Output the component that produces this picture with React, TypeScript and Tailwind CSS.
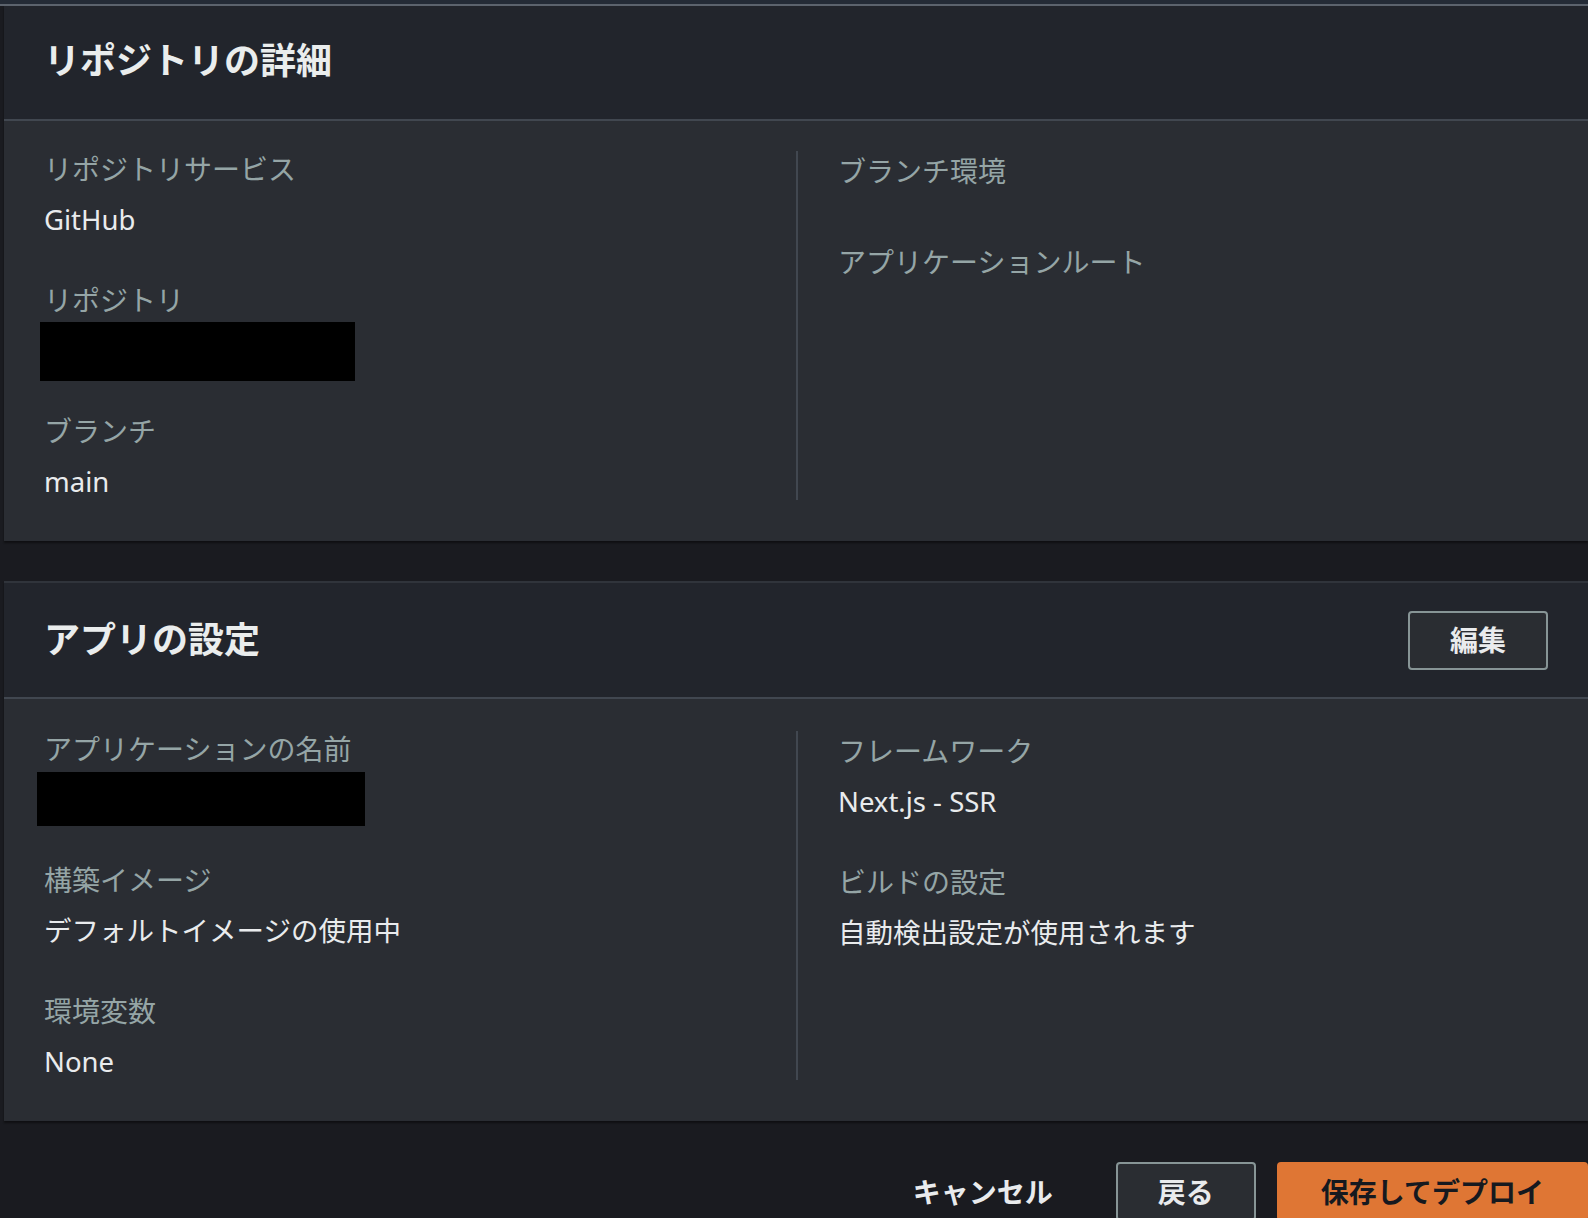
import type { ReactNode } from 'react';

type Field = {
  label: string;
  value?: ReactNode;
};

const FieldList = ({ fields }: { fields: Field[] }) => (
  <div className="flex flex-col gap-[40px]">
    {fields.map((field) => (
      <div key={field.label}>
        <div className="text-[28px] leading-[40px] text-[#95a5a6]">{field.label}</div>
        {field.value === undefined ? (
          <div className="mt-[11px] h-0" />
        ) : (
          <div className="mt-[11px] text-[27.5px] leading-[40px] text-[#e9ebed]">{field.value}</div>
        )}
      </div>
    ))}
  </div>
);

const Redacted = ({ className }: { className: string }) => (
  <div className="relative h-[40px]">
    <div className={`absolute bg-black ${className}`} />
  </div>
);

const Card = ({
  title,
  action,
  left,
  right,
  headerClass,
  bodyClass,
  cardClass,
}: {
  title: string;
  action?: ReactNode;
  left: Field[];
  right: Field[];
  headerClass: string;
  bodyClass: string;
  cardClass: string;
}) => (
  <section className={`ml-[4px] bg-[#2a2d33] shadow-[0_2px_2px_rgba(0,0,0,0.45)] ${cardClass}`}>
    <header className={`flex items-center justify-between bg-[#22252c] px-[40px] ${headerClass}`}>
      <h2 className="text-[36px] font-bold text-[#eaeded]">{title}</h2>
      {action}
    </header>
    <div className="h-[2px] bg-[#414750]" />
    <div className={`grid grid-cols-[752px_1fr] px-[40px] ${bodyClass}`}>
      <FieldList fields={left} />
      <div className="my-[2px] border-l-2 border-[#414750] pl-[40px]">
        <FieldList fields={right} />
      </div>
    </div>
  </section>
);

const OutlineButton = ({ children }: { children: ReactNode }) => (
  <button className="h-[59px] rounded-[4px] border-2 border-[#879596] bg-[#2a2d32] px-[40px] text-[28px] font-bold text-[#e9ebed]">
    {children}
  </button>
);

export default function App() {
  return (
    <div className="min-h-screen overflow-hidden bg-[#1a1b20] font-['Noto_Sans','Noto_Sans_CJK_JP',sans-serif]">
      <div className="h-[4px] bg-[#242b36]" />
      <div className="h-[2px] bg-[#5c636d]" />

      <Card
        title="リポジトリの詳細"
        cardClass=""
        headerClass="h-[113px] pb-[3px]"
        bodyClass="pt-[28px] pb-[39px]"
        left={[
          { label: 'リポジトリサービス', value: 'GitHub' },
          { label: 'リポジトリ', value: <Redacted className="-top-[9px] -left-[4px] h-[59px] w-[315px]" /> },
          { label: 'ブランチ', value: 'main' },
        ]}
        right={[{ label: 'ブランチ環境' }, { label: 'アプリケーションルート' }]}
      />

      <Card
        title="アプリの設定"
        cardClass="mt-[40px] border-t-2 border-[#30343b]"
        headerClass="h-[114px]"
        bodyClass="pt-[30px] pb-[39px]"
        action={<OutlineButton>編集</OutlineButton>}
        left={[
          { label: 'アプリケーションの名前', value: <Redacted className="-top-[8px] -left-[7px] h-[54px] w-[328px]" /> },
          { label: '構築イメージ', value: 'デフォルトイメージの使用中' },
          { label: '環境変数', value: 'None' },
        ]}
        right={[
          { label: 'フレームワーク', value: 'Next.js - SSR' },
          { label: 'ビルドの設定', value: '自動検出設定が使用されます' },
        ]}
      />

      <div className="mt-[41px] flex justify-end gap-[21px]">
        <button className="h-[59px] border-2 border-transparent px-[40px] text-[28px] font-bold text-[#e9ebed]">
          キャンセル
        </button>
        <OutlineButton>戻る</OutlineButton>
        <button className="h-[59px] rounded-[4px] border-2 border-[#df7634] bg-[#df7634] px-[42px] text-[28px] font-bold text-[#16191f]">
          保存してデプロイ
        </button>
      </div>
    </div>
  );
}
